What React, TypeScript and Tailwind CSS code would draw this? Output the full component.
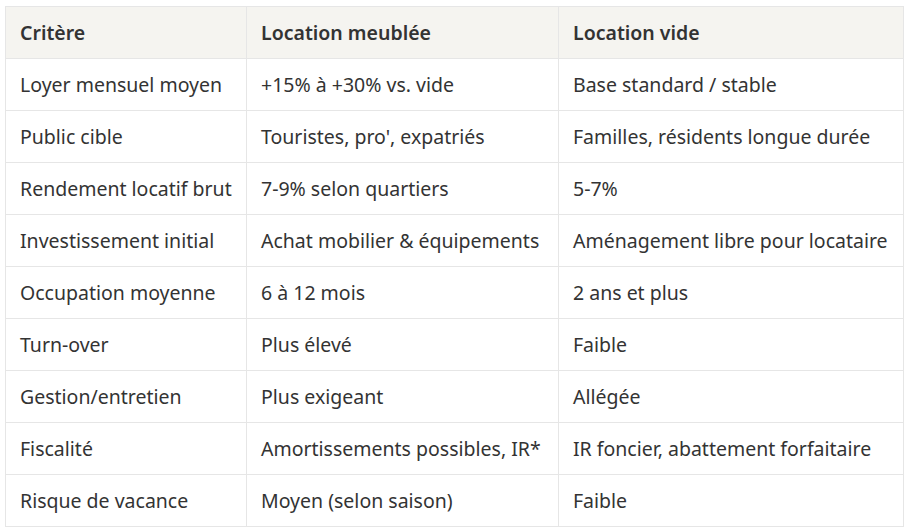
const rows: [string, string, string][] = [
  ['Loyer mensuel moyen', '+15% à +30% vs. vide', 'Base standard / stable'],
  ['Public cible', "Touristes, pro', expatriés", 'Familles, résidents longue durée'],
  ['Rendement locatif brut', '7-9% selon quartiers', '5-7%'],
  ['Investissement initial', 'Achat mobilier & équipements', 'Aménagement libre pour locataire'],
  ['Occupation moyenne', '6 à 12 mois', '2 ans et plus'],
  ['Turn-over', 'Plus élevé', 'Faible'],
  ['Gestion/entretien', 'Plus exigeant', 'Allégée'],
  ['Fiscalité', 'Amortissements possibles, IR*', 'IR foncier, abattement forfaitaire'],
  ['Risque de vacance', 'Moyen (selon saison)', 'Faible'],
];

export default function App() {
  return (
    <div className="bg-white w-[909px] h-[532px] pl-[5px] pt-[6px] font-['Noto_Sans',sans-serif] text-[#333333]">
      <table className="border-collapse table-fixed w-[898px] text-[19.5px]">
        <colgroup>
          <col className="w-[241px]" />
          <col className="w-[312px]" />
          <col className="w-[345px]" />
        </colgroup>
        <thead>
          <tr className="bg-[#f5f4f0] h-[52px]">
            {['Critère', 'Location meublée', 'Location vide'].map((h) => (
              <th key={h} className="border border-[#e6e6e6] px-[14px] text-left font-semibold leading-none">
                {h}
              </th>
            ))}
          </tr>
        </thead>
        <tbody>
          {rows.map((r) => (
            <tr key={r[0]} className="h-[52px]">
              {r.map((c, i) => (
                <td key={i} className="border border-[#e6e6e6] px-[14px] whitespace-nowrap leading-none">
                  {c}
                </td>
              ))}
            </tr>
          ))}
        </tbody>
      </table>
    </div>
  );
}
